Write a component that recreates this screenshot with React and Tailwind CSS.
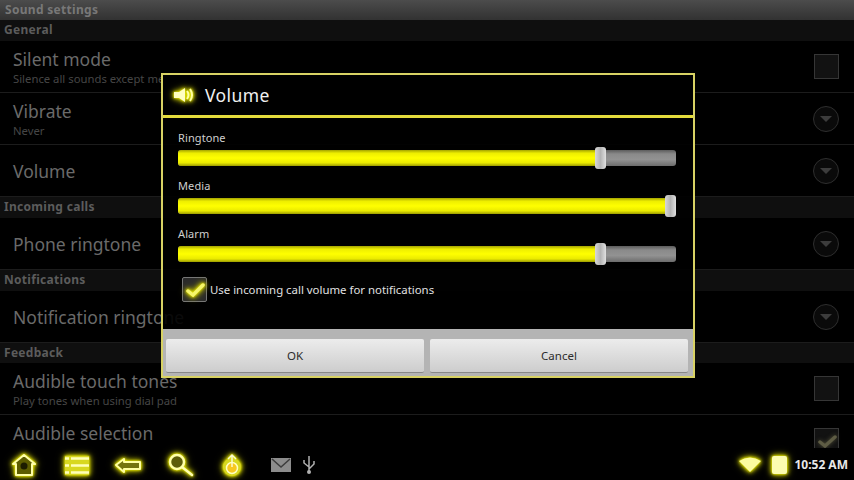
const font = "font-['Noto_Sans','Open_Sans',sans-serif]";

function SectionHeader({ label, height = "h-[21px]" }) {
    return (
        <div className={`${height} bg-[#0f0f0f] pl-[4px] text-[12px] leading-[19px] font-bold text-[#5c5c5c] tracking-[0.3px]`}>
            {label}
        </div>
    );
}

function Arrow() {
    return (
        <div className="w-[26px] h-[26px] rounded-full border border-[#2e2e2e] bg-[#0a0a0a] flex items-center justify-center">
            <div className="w-0 h-0 border-l-[6px] border-r-[6px] border-t-[6px] border-l-transparent border-r-transparent border-t-[#3c3c3c]" />
        </div>
    );
}

function CheckBox({ checked }) {
    return (
        <div className="w-[25px] h-[25px] border border-[#363636] bg-[#121212] flex items-center justify-center">
            {checked && (
                <svg width="20" height="16" viewBox="0 0 20 16" className="drop-shadow-[0_0_2px_#55533a]">
                    <path d="M3 9 L8 13 L18 4" fill="none" stroke="#5e5c44" strokeWidth="3.5" strokeLinecap="round" />
                </svg>
            )}
        </div>
    );
}

function Row({ title, sub, right }) {
    return (
        <div className="h-[52px] border-b border-[#1c1c1c] pl-[13px] pr-[15px] flex items-center justify-between">
            <div className="min-w-0">
                <div className="text-[17.5px] leading-[22px] text-[#6a6a6a]">{title}</div>
                {sub && <div className="mt-[1px] text-[11.3px] leading-[15px] text-[#464646]">{sub}</div>}
            </div>
            {right}
        </div>
    );
}

function Slider({ label, value }) {
    return (
        <div className="h-[48px]">
            <div className="text-[11px] leading-[16px] text-[#cfcfcf] tracking-[0.1px]">{label}</div>
            <div className="relative h-[16px] mt-[4px] w-[498px] rounded-[3px] bg-[linear-gradient(#5c5c5c,#8a8a8a_25%,#929292_60%,#6c6c6c)]">
                <div
                    className="h-full rounded-l-[3px] bg-[linear-gradient(#a4a400,#eeee00_20%,#ffff00_50%,#eaea00_80%,#9c9c00)]"
                    style={{ width: `${value}px` }}
                />
                <div
                    className="absolute top-[-3px] w-[11px] h-[22px] rounded-[3px] bg-gradient-to-r from-[#d8d8d8] via-[#b4b4b4] to-[#e0e0e0]"
                    style={{ left: `${value - 2}px` }}
                />
            </div>
        </div>
    );
}

function Btn({ label }) {
    return (
        <div className="flex-1 h-[34px] rounded-[2px] bg-gradient-to-b from-[#ececec] to-[#cdcdcd] border-b border-[#888] flex items-center justify-center text-[11.5px] text-[#2c2c2c]">
            {label}
        </div>
    );
}

const glow = "[filter:drop-shadow(0_0_1px_#f0f000)_drop-shadow(0_0_2px_#d8d800)_drop-shadow(0_0_3px_#8c8c00)]";

function NavIcon({ className, children, w = 32 }) {
    return (
        <svg width={w} height="30" viewBox={`0 0 ${w} 30`} className={`${glow} ${className || ""}`}>
            {children}
        </svg>
    );
}

export default function App() {
    return (
        <div className={`relative w-[854px] h-[480px] overflow-hidden bg-black ${font}`}>
            <div className="h-[20px] bg-gradient-to-b from-[#4c4c4c] to-[#323232] pl-[5px] text-[12px] leading-[19px] font-bold text-[#787878] tracking-[0.3px]">
                Sound settings
            </div>
            <SectionHeader label="General" />
            <Row title="Silent mode" sub="Silence all sounds except media & alarms" right={<CheckBox />} />
            <Row title="Vibrate" sub="Never" right={<Arrow />} />
            <Row title="Volume" right={<Arrow />} />
            <SectionHeader label="Incoming calls" />
            <Row title="Phone ringtone" right={<Arrow />} />
            <SectionHeader label="Notifications" />
            <Row title="Notification ringtone" right={<Arrow />} />
            <SectionHeader label="Feedback" height="h-[20px]" />
            <Row title="Audible touch tones" sub="Play tones when using dial pad" right={<CheckBox />} />
            <Row title="Audible selection" sub="Play sound when making screen selection" right={<CheckBox checked />} />

            {/* dialog */}
            <div className="absolute left-[161px] top-[73px] w-[534px] h-[305px] border-2 border-[#d8d264] flex flex-col">
                <div className="h-[40px] bg-black flex items-center pl-[10px] gap-[10px]">
                    <svg width="22" height="18" viewBox="0 0 22 18" className={glow}>
                        <path d="M1 6 H6 L12 2 V16 L6 12 H1 Z" fill="#ffffc0" />
                        <path d="M14 5 Q17 9 14 13 M17 3 Q21 9 17 15" stroke="#ffffa0" strokeWidth="2" fill="none" />
                    </svg>
                    <span className="text-[17.5px] text-[#f0f0f0] tracking-[0.4px]">Volume</span>
                </div>
                <div className="h-[3px] bg-[#e4dc3c]" />
                <div className="flex-1 bg-black/90 pl-[15px] pt-[12px]">
                    <Slider label="Ringtone" value={419} />
                    <Slider label="Media" value={489} />
                    <Slider label="Alarm" value={419} />
                    <div className="flex items-center ml-[4px] mt-[3px] gap-[3px]">
                        <div className="w-[25px] h-[25px] rounded-[2px] border border-[#777] bg-[#2a2a2a] flex items-center justify-center">
                            <svg width="20" height="16" viewBox="0 0 20 16" className={glow}>
                                <path d="M3 9 L8 13 L18 3" fill="none" stroke="#f6f66c" strokeWidth="3.5" strokeLinecap="round" />
                            </svg>
                        </div>
                        <span className="text-[11.4px] text-[#e0e0e0]">Use incoming call volume for notifications</span>
                    </div>
                </div>
                <div className="h-[47px] bg-[#b4b4b4] flex gap-[6px] pl-[3px] pr-[5px] pt-[10px]">
                    <Btn label="OK" />
                    <Btn label="Cancel" />
                </div>
            </div>

            {/* status bar */}
            <div className="absolute left-0 bottom-0 w-full h-[32px] bg-black flex items-center pt-[2px] pr-[6px]">
                <div className="flex items-center w-[262px]">
                    <NavIcon className="ml-[9px]">
                        <path d="M4 14 L15 5 L26 14 H23 V25 H7 V14 Z" fill="#5c5c00" stroke="#ffffa8" strokeWidth="2" strokeLinejoin="round" />
                        <circle cx="15" cy="16" r="3.5" fill="#1c1c00" />
                    </NavIcon>
                    <NavIcon className="ml-[20px]">
                        <path d="M4 6 H28 V25 H4 Z" fill="#d8d820" />
                        <path d="M4 8.5 H8 M10 8.5 H28 M4 15.5 H8 M10 15.5 H28 M4 22.5 H8 M10 22.5 H28" stroke="#ffffb8" strokeWidth="2.5" />
                    </NavIcon>
                    <NavIcon className="ml-[19px]">
                        <path d="M4 15 L12 9 V12 H28 V19 H12 V22 Z" fill="#74740c" stroke="#ffffa0" strokeWidth="2" strokeLinejoin="round" />
                    </NavIcon>
                    <NavIcon className="ml-[21px]" w={30}>
                        <circle cx="12" cy="12" r="7" fill="#5c5c08" stroke="#ffffa8" strokeWidth="2.5" />
                        <path d="M17 17 L27 25" stroke="#ffffb0" strokeWidth="2.5" strokeLinecap="round" />
                    </NavIcon>
                    <NavIcon className="ml-[26px]" w={22}>
                        <circle cx="11" cy="17" r="9" fill="#d8d820" />
                        <circle cx="11" cy="18" r="5.5" fill="#f8c820" stroke="#ffffc0" strokeWidth="1.5" />
                        <path d="M11 6 V17 M7 9 L11 5 L15 9" stroke="#fafad0" strokeWidth="1.5" fill="none" />
                    </NavIcon>
                </div>
                <svg width="20" height="14" viewBox="0 0 20 14" className="ml-[9px]">
                    <path d="M0 0 H20 V14 H0 Z" fill="#8c8c8c" />
                    <path d="M1 1 L10 9 L19 1" fill="none" stroke="#3c3c3c" strokeWidth="1.5" />
                </svg>
                <svg width="16" height="20" viewBox="0 0 16 20" className="ml-[10px]">
                    <path d="M8 1 V16 M8 12 L3 8 V5 M8 14 L13 9 V6" stroke="#b0b0b0" strokeWidth="1.5" fill="none" />
                    <circle cx="8" cy="17" r="2" fill="#b0b0b0" />
                </svg>
                <div className="ml-auto flex items-center">
                    <svg width="24" height="16" viewBox="0 0 24 16" className={glow}>
                        <path d="M1 4 Q12 -3 23 4 L12 15 Z" fill="#fcfca0" />
                    </svg>
                    <div className={`w-[15px] h-[18px] rounded-[2px] bg-[#fcfcb0] ml-[10px] ${glow}`} />
                    <span className="ml-[7px] text-[12px] font-bold text-[#e8e8e8]">10:52 AM</span>
                </div>
            </div>
        </div>
    );
}
